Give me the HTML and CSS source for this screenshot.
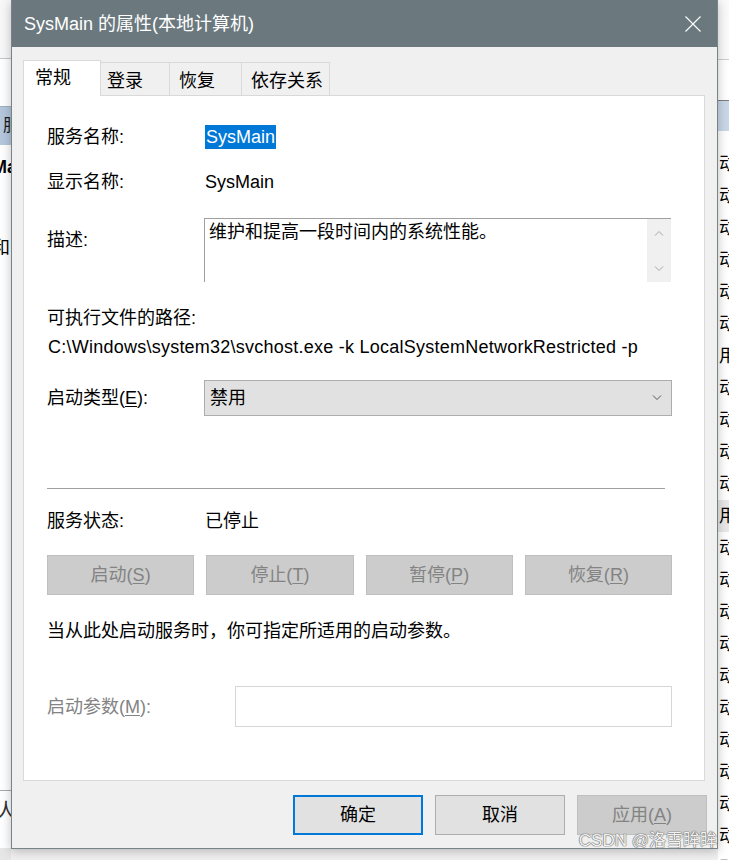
FILE: index.html
```html
<!DOCTYPE html>
<html lang="zh-CN">
<head>
<meta charset="utf-8">
<title>SysMain 的属性</title>
<link rel="stylesheet" href="styles.css">
</head>
<body>
<div class="desktop">
  <div class="bgapp">
    <div class="bg-left">
      <div class="bl-top"></div>
      <div class="bl-gap"></div>
      <div class="bl-head">服务</div>
      <div class="bl-name">Ma</div>
      <div class="bl-desc">和</div>
      <div class="bl-fill"></div>
      <div class="bl-foot">人</div>
      <div class="bl-bottom"></div>
    </div>
    <div class="bg-mid"></div>
    <div class="bg-right">
      <div class="br-top"></div>
      <div class="br-gap"></div>
      <div class="br-head"></div>
      <div class="br-rows">
        <div class="br-row">动</div>
        <div class="br-row">动</div>
        <div class="br-row">动</div>
        <div class="br-row">动</div>
        <div class="br-row">动</div>
        <div class="br-row">动</div>
        <div class="br-row">用</div>
        <div class="br-row">动</div>
        <div class="br-row">动</div>
        <div class="br-row">动</div>
        <div class="br-row">动</div>
        <div class="br-row hl">用</div>
        <div class="br-row">动</div>
        <div class="br-row">动</div>
        <div class="br-row">动</div>
        <div class="br-row">动</div>
        <div class="br-row">动</div>
        <div class="br-row">动</div>
        <div class="br-row">动</div>
        <div class="br-row">动</div>
        <div class="br-row">动</div>
        <div class="br-row">动</div>
        <div class="br-row">动</div>
      </div>
    </div>
  </div>

  <div class="dialog">
    <div class="titlebar">
      <span class="title">SysMain 的属性(本地计算机)</span>
      <svg class="close" width="16" height="16" viewBox="0 0 16 16"><path d="M0.5 0.5L15.5 15.5M15.5 0.5L0.5 15.5" stroke="#ffffff" stroke-width="1.1" fill="none"/></svg>
    </div>
    <div class="client">
      <div class="tabs">
        <div class="tab active t1">常规</div>
        <div class="tab t2">登录</div>
        <div class="tab t3">恢复</div>
        <div class="tab t4">依存关系</div>
      </div>
      <div class="panel">
        <div class="row r-name"><span class="label">服务名称:</span><span class="sel">SysMain</span></div>
        <div class="row r-disp"><span class="label">显示名称:</span><span class="value">SysMain</span></div>
        <div class="row r-desc">
          <span class="label desc-label">描述:</span>
          <div class="descbox">
            <div class="desctext">维护和提高一段时间内的系统性能。</div>
            <div class="vscroll">
              <svg width="10" height="6" viewBox="0 0 10 6"><path d="M1 5.5L5 1.5L9 5.5" stroke="#a6a6a6" stroke-width="1" fill="none"/></svg>
              <svg width="10" height="6" viewBox="0 0 10 6"><path d="M1 0.5L5 4.5L9 0.5" stroke="#a6a6a6" stroke-width="1" fill="none"/></svg>
            </div>
          </div>
        </div>
        <div class="line r-pathlabel">可执行文件的路径:</div>
        <div class="line r-path">C:\Windows\system32\svchost.exe -k LocalSystemNetworkRestricted -p</div>
        <div class="row r-type">
          <span class="label">启动类型(<u>E</u>):</span>
          <div class="combo"><span class="combo-text">禁用</span><svg width="10" height="6" viewBox="0 0 10 6"><path d="M1 0.5L5 4.5L9 0.5" stroke="#555555" stroke-width="1" fill="none"/></svg></div>
        </div>
        <div class="sep"></div>
        <div class="row r-status"><span class="label">服务状态:</span><span class="value">已停止</span></div>
        <div class="svc-buttons">
          <div class="btn disabled">启动(<u>S</u>)</div>
          <div class="btn disabled">停止(<u>T</u>)</div>
          <div class="btn disabled">暂停(<u>P</u>)</div>
          <div class="btn disabled">恢复(<u>R</u>)</div>
        </div>
        <div class="line r-hint">当从此处启动服务时，你可指定所适用的启动参数。</div>
        <div class="row r-param"><span class="label param-label">启动参数(<u>M</u>):</span><div class="input"></div></div>
      </div>
      <div class="footer">
        <div class="btn default">确定</div>
        <div class="btn">取消</div>
        <div class="btn disabled">应用(<u>A</u>)</div>
      </div>
    </div>
  </div>

  <div class="watermark">CSDN @洛雪眸眸</div>
</div>
</body>
</html>
```

FILE: styles.css
```css
* { box-sizing: border-box; }
html, body { margin: 0; padding: 0; }
body {
  width: 729px;
  height: 860px;
  overflow: hidden;
  font-family: "Liberation Sans", "Noto Sans CJK SC", sans-serif;
  font-size: 18px;
  color: #000;
  background: #e9e9e9;
}
u { text-decoration: underline; text-underline-offset: 2px; text-decoration-thickness: 1px; }

.desktop { position: relative; width: 729px; height: 860px; overflow: hidden; }

/* background application */
.bgapp { display: flex; width: 729px; height: 860px; background: #ebebeb; }
.bg-left {
  width: 11px; display: flex; flex-direction: column;
  background: #ffffff; overflow: hidden; white-space: nowrap;
}
.bl-top { height: 59px; background: #f8f8f8; border-bottom: 1px solid #c6c6c6; flex: none; }
.bl-gap { height: 47px; flex: none; }
.bl-head {
  height: 39px; flex: none; background: #b5c7dd; border-top: 1px solid #9fb0c4;
  line-height: 38px; padding-left: 3px; font-size: 17px; color: #1a1a1a;
}
.bl-name { height: 24px; flex: none; margin-top: 10px; margin-left: -8px; font-weight: bold; line-height: 24px; }
.bl-desc { height: 24px; flex: none; margin-top: 57px; margin-left: -8px; line-height: 24px; }
.bl-fill { flex: 1; }
.bl-foot { height: 58px; flex: none; border-top: 1px solid #a9a9a9; line-height: 40px; margin-left: -4px; font-size: 20px; color: #333; }
.bl-bottom { height: 12px; flex: none; background: #e6e6e6; }

.bg-mid { flex: 1; background: #f0f0f0; }

.bg-right {
  width: 11px; display: flex; flex-direction: column;
  background: #ffffff; overflow: hidden; white-space: nowrap;
}
.br-top { height: 60px; flex: none; background: #fafafa; border-bottom: 1px solid #cfcfcf; }
.br-gap { height: 40px; flex: none; }
.br-head { height: 31px; flex: none; background: #c9d7e8; border-top: 1px solid #7e7e7e; }
.br-rows { padding-top: 17px; }
.br-row { height: 32px; line-height: 32px; padding-left: 1px; font-size: 18px; }
.br-row.hl { background: #e8e8e8; }

/* dialog window */
.dialog {
  position: absolute; left: 11px; top: 0;
  width: 707px; height: 849px;
  border: 1px solid #76848a; border-top: none;
  background: #f0f0f0;
  box-shadow: 0 2px 10px rgba(0, 0, 0, 0.25);
  display: flex; flex-direction: column;
}
.titlebar {
  height: 47px; flex: none;
  background: #6b797e;
  display: flex; align-items: center; justify-content: space-between;
  padding: 0 16px 0 12px;
}
.title { color: #ffffff; font-size: 18px; line-height: 24px; }
.close { display: block; }

.client {
  flex: 1;
  background: #f0f0f0;
  padding: 13px 10px 13px 11px;
  display: flex; flex-direction: column;
}

.tabs { display: flex; align-items: flex-end; height: 36px; flex: none; }
.tab {
  height: 34px;
  border: 1px solid #d9d9d9; border-left: none; border-bottom: none;
  background: #f0f0f0;
  padding-top: 6px;
  line-height: 24px;
  font-size: 18px;
  white-space: nowrap;
}
.tab.active {
  height: 36px; padding-top: 5px;
  border-left: 1px solid #d9d9d9;
  background: #ffffff;
  position: relative; z-index: 1;
}
.t1 { width: 78px; padding-left: 11px; }
.t2 { width: 69px; padding-left: 6px; }
.t3 { width: 72px; padding-left: 9px; }
.t4 { width: 88px; padding-left: 9px; }

.panel {
  margin-top: -1px;
  width: 682px; height: 686px; flex: none;
  border: 1px solid #d9d9d9;
  background: #ffffff;
  padding: 29px 32px 0 23px;
  display: flex; flex-direction: column;
}
.row { display: flex; align-items: center; flex: none; }
.line { height: 24px; line-height: 24px; flex: none; white-space: nowrap; }
.label { width: 157px; flex: none; line-height: 24px; white-space: nowrap; }
.value { line-height: 24px; margin-left: 1px; }
.sel { background: #0078d7; color: #ffffff; line-height: 24px; height: 24px; margin-left: 1px; padding: 0 1px; }

.r-name { height: 24px; }
.r-disp { height: 24px; margin-top: 21px; }
.r-desc { height: 64px; margin-top: 24px; align-items: flex-start; }
.desc-label { margin-top: 10px; }
.descbox {
  width: 467px; height: 64px;
  border-top: 1px solid #a0a0a0; border-left: 1px solid #a0a0a0;
  display: flex;
}
.desctext { flex: 1; padding: 1px 4px; line-height: 24px; }
.vscroll {
  width: 24px; background: #f0f0f0;
  display: flex; flex-direction: column; align-items: center; justify-content: space-between;
  padding: 11px 0 10px;
}
.vscroll svg { display: block; }

.r-pathlabel { margin-top: 24px; }
.r-path { margin-top: 5px; padding-left: 1px; letter-spacing: 0.24px; }

.r-type { height: 36px; margin-top: 21px; }
.combo {
  flex: 1; height: 36px;
  background: #e1e1e1; border: 1px solid #adadad;
  display: flex; align-items: center; justify-content: space-between;
  padding: 0 9px 0 5px;
}
.combo-text { line-height: 24px; }
.combo svg { display: block; }

.sep { height: 1px; width: 618px; background: #a0a0a0; margin-top: 72px; flex: none; }

.r-status { height: 24px; margin-top: 20px; }

.svc-buttons {
  display: grid; grid-template-columns: repeat(4, 1fr); gap: 12px;
  height: 40px; margin-top: 22px; flex: none;
}

.btn {
  height: 40px;
  display: flex; align-items: center; justify-content: center;
  border: 1px solid #adadad; background: #e1e1e1;
  font-size: 18px; line-height: 24px; white-space: nowrap;
}
.btn.default { border: 2px solid #0078d7; }
.btn.disabled { background: #cccccc; border-color: #bfbfbf; color: #838383; }

.r-hint { margin-top: 24px; }

.r-param { height: 41px; margin-top: 43px; }
.param-label { width: 188px; color: #838383; }
.input { flex: 1; height: 41px; border: 1px solid #d6d6d6; background: #ffffff; }

.footer {
  display: flex; justify-content: flex-end; gap: 12px;
  margin-top: 14px; flex: none;
}
.footer .btn { width: 130px; }

.watermark {
  position: absolute; right: 12px; top: 830px;
  font-size: 17px; line-height: 22px;
  color: #f2f2f2;
  text-shadow: 0 0 1px #666666, 0 0 1px #666666, 0 0 1px #666666;
  white-space: nowrap;
}
```
